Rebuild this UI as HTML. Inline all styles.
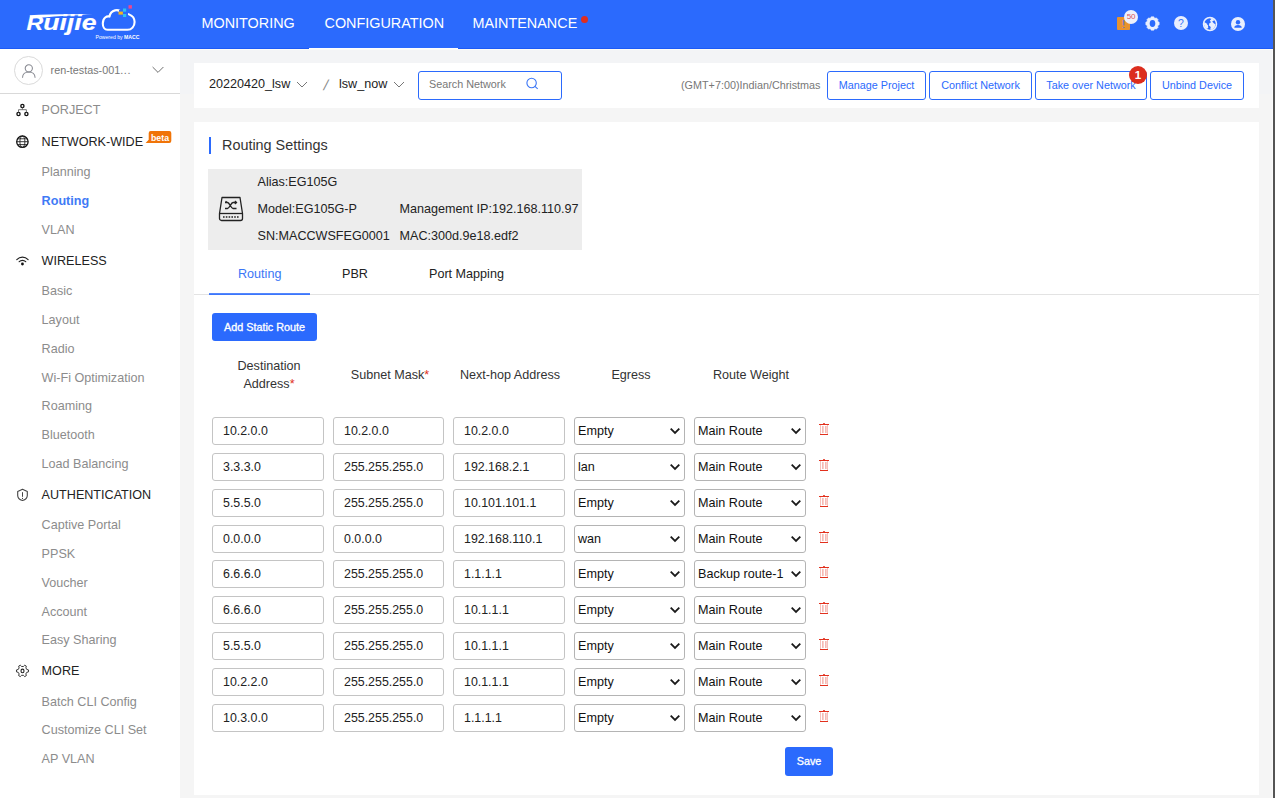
<!DOCTYPE html>
<html lang="en">
<head>
<meta charset="utf-8">
<title>Ruijie Cloud - Routing Settings</title>
<style>
*{box-sizing:border-box;margin:0;padding:0}
html,body{width:1275px;height:798px;overflow:hidden;background:#f5f5f5;font-family:"Liberation Sans",sans-serif;color:#222}
#hdr{position:absolute;left:0;top:0;width:1273px;height:49px;background:#2b6afd;border-bottom:1px solid #1c5af6}
#hdr .nav{position:absolute;top:14px;font-size:14.4px;line-height:18px;color:#fff;white-space:nowrap}
#navline{position:absolute;left:309px;top:48px;width:149px;height:1px;background:#fff}
#hline{position:absolute;left:180px;top:49px;width:1093px;height:1px;background:#fdfcf7}
#bgtop{position:absolute;left:180px;top:50px;width:1093px;height:44px;background:#f3f4f6}
#edge{position:absolute;left:1273px;top:0;width:2px;height:798px;background:#555}
#edgel{position:absolute;left:1272px;top:50px;width:1px;height:748px;background:#fafafa}
#side{position:absolute;left:0;top:49px;width:180px;height:749px;background:#fff}
#user{position:absolute;left:0;top:0;width:180px;height:45px;border-bottom:1px solid #d9d9d9}
#avatar{position:absolute;left:14px;top:7px;width:29px;height:29px;border:1px solid #dadada;border-radius:50%}
#uname{position:absolute;left:50.600px;top:13px;font-size:10.8px;line-height:16px;color:#777;white-space:nowrap}
.sh,.si{position:absolute;left:41.600px;font-size:12.6px;line-height:18px;white-space:nowrap}
.sh{color:#222}
.sh.g{color:#8c8c8c}
.si{color:#8c8c8c}
.si.act{color:#3f7af6;font-weight:bold}
.ico{position:absolute;left:15px}
#beta{position:absolute;left:148.700px;top:131px;width:22.600px;height:12px;color:#fff;font-size:8.800px;line-height:14.400px;font-weight:bold;text-align:center}
#topbar{position:absolute;left:194px;top:63px;width:1065px;height:45px;background:#fff}
#panel{position:absolute;left:194px;top:122px;width:1065px;height:673px;background:#fff}
.t{position:absolute;white-space:nowrap}
.btn{position:absolute;top:71px;height:29px;border:1px solid #2b6afd;border-radius:3px;color:#2b6afd;font-size:10.8px;line-height:27px;text-align:center;background:#fff;white-space:nowrap}
.inp{position:absolute;width:112px;height:28px;border:1px solid #c4c4c4;border-radius:3px;background:#fff;font-size:12.4px;line-height:26px;padding-left:10px;color:#222;white-space:nowrap}
.sel{position:absolute;width:112px;height:28px;border:1px solid #b4b4b4;border-radius:3px;background:#fff;font-size:12.6px;line-height:26px;padding-left:3px;color:#111;white-space:nowrap}
.sel svg{position:absolute;right:3px;top:9px}
.th{position:absolute;font-size:12.6px;line-height:18px;color:#333;text-align:center;white-space:nowrap}
.red{color:#e0301e}
.trash{position:absolute;left:819px}
</style>
</head>
<body>
<div id="hdr">
  <svg style="position:absolute;left:20px;top:0" width="130" height="48" viewBox="0 0 130 48">
    <text x="6.500" y="29.600" font-family="Liberation Sans, sans-serif" font-weight="bold" font-style="italic" font-size="19.500" fill="#fff" stroke="#fff" stroke-width="0.15" textLength="70" lengthAdjust="spacingAndGlyphs">R<tspan font-size="22.500">uijie</tspan></text><path d="M9.500 15.200C30 14.200 55 14.200 73 14.600C55 15.400 30 16.600 12 18.600Z" fill="#fff"/>
    <path d="M82.800 23.500C82.800 17.500 87 15.800 89.500 16.600C90.500 9.800 99 7.800 102 13.500C104 13 114.600 13.500 114.600 22C114.600 26.500 111.500 29.800 107.500 29.800H87.500C84.500 29.800 82.800 27 82.800 23.500Z" fill="none" stroke="#fff" stroke-width="2.1" stroke-linejoin="round"/>
    <rect x="99" y="10" width="9" height="8" fill="#2b6afd"/>
    <rect x="108.500" y="5.200" width="3.400" height="3.400" fill="#f0468c"/>
    <rect x="103" y="8.500" width="3.200" height="3.200" fill="#2cc3f0"/>
    <rect x="98.500" y="11.600" width="4.400" height="3" fill="#f5b41e"/>
    <rect x="103" y="14" width="3.200" height="3" fill="#2cc3f0"/>
    <text x="75.500" y="39" font-family="Liberation Sans, sans-serif" font-size="4.800" fill="#fff" textLength="44" lengthAdjust="spacingAndGlyphs">Powered by <tspan font-weight="bold">MACC</tspan></text>
  </svg>
  <div class="nav" style="left:201.500px">MONITORING</div>
  <div class="nav" style="left:324.500px">CONFIGURATION</div>
  <div class="nav" style="left:472.500px">MAINTENANCE</div>
  <div style="position:absolute;left:580.800px;top:15.800px;width:7.300px;height:7.300px;border-radius:50%;background:#e02d1f"></div>
  <!-- right icons -->
  <div style="position:absolute;left:1117px;top:17px;width:13px;height:13px;background:#e8922e;border-radius:1px;color:#3b6ef0;font-size:11px;line-height:15px;text-align:center">!</div>
  <div style="position:absolute;left:1124px;top:9.500px;width:14px;height:14px;border-radius:50%;background:#eef1fc;color:#d9545a;font-size:8px;line-height:13.500px;text-align:center;letter-spacing:-0.3px">50</div>
  <svg style="position:absolute;left:1144.900px;top:15.900px" width="15" height="15" viewBox="0 0 15 15"><path d="M13.03 5.75L14.17 6.17L14.17 8.83L13.03 9.25L12.65 10.17L13.15 11.28L11.28 13.15L10.17 12.65L9.25 13.03L8.83 14.17L6.17 14.17L5.75 13.03L4.83 12.65L3.72 13.15L1.85 11.28L2.35 10.17L1.97 9.25L0.83 8.83L0.83 6.17L1.97 5.75L2.35 4.83L1.85 3.72L3.72 1.85L4.83 2.35L5.75 1.97L6.17 0.83L8.83 0.83L9.25 1.97L10.17 2.35L11.28 1.85L13.15 3.72L12.65 4.83Z" fill="#e9effe" stroke="#e9effe" stroke-width="0.6" stroke-linejoin="round"/><ellipse cx="7.500" cy="7.500" rx="2.800" ry="3.400" fill="#2b6afd"/></svg>
  <div style="position:absolute;left:1174px;top:16px;width:14px;height:14px;border-radius:50%;background:#e9effe;color:#3b76f6;font-size:10.5px;line-height:14.5px;text-align:center">?</div>
  <svg style="position:absolute;left:1201.700px;top:16px" width="16" height="16" viewBox="0 0 16 16"><circle cx="8" cy="8" r="6.500" fill="#2b6afd" stroke="#e9effe" stroke-width="1.500"/><path d="M8 1.800L11.500 2.800L12 4.500L10.200 5.500L11.800 7.200L13.600 8.500L12.500 11.500L10 13.800L8.200 13.500L8.800 11L7 9.500L7.200 7.500L9 6.200L7.800 4.500L9.200 3.300Z" fill="#e9effe"/><path d="M2.200 6L4.200 7.200L5.800 9.200L6.200 11.500L5 13L3.200 11.500L2 8.500Z" fill="#e9effe"/></svg>
  <svg style="position:absolute;left:1231px;top:16.500px" width="14" height="14" viewBox="0 0 14 14"><circle cx="7" cy="7" r="7" fill="#e9effe"/><circle cx="7" cy="5.200" r="2.200" fill="#2b6afd"/><path d="M3.300 10.800C3.300 8.800 4.800 7.900 7 7.900C9.200 7.900 10.700 8.800 10.700 10.800Z" fill="#2b6afd"/></svg>
</div>
<div id="bgtop"></div>
<div id="hline"></div>
<div id="navline"></div>
<div id="side">
  <div id="user">
    <div id="avatar"></div>
    <svg style="position:absolute;left:21px;top:14px" width="16" height="16" viewBox="0 0 16 16" fill="none" stroke="#85878f" stroke-width="1.050"><circle cx="7.800" cy="5.300" r="3.600"/><path d="M1.500 14.800C1.500 11.200 4.300 8.900 7.800 8.900C11.300 8.900 14.100 11.200 14.100 14.800"/></svg>
    <div id="uname">ren-testas-001<span style="letter-spacing:0.6px">...</span></div>
    <svg style="position:absolute;left:152.400px;top:17.100px" width="12" height="8" viewBox="0 0 12 8" fill="none" stroke="#6e6e6e" stroke-width="1"><path d="M0.600 1L6 6.400L11.400 1"/></svg>
  </div>
</div>

<div class="sh g" style="top:101px">PORJECT</div>
<div class="sh" style="top:133px">NETWORK-WIDE</div>
<div class="si" style="top:163px">Planning</div>
<div class="si act" style="top:192px">Routing</div>
<div class="si" style="top:221px">VLAN</div>
<div class="sh" style="top:252px">WIRELESS</div>
<div class="si" style="top:282px">Basic</div>
<div class="si" style="top:311px">Layout</div>
<div class="si" style="top:340px">Radio</div>
<div class="si" style="top:369px">Wi-Fi Optimization</div>
<div class="si" style="top:397px">Roaming</div>
<div class="si" style="top:426px">Bluetooth</div>
<div class="si" style="top:455px">Load Balancing</div>
<div class="sh" style="top:486px">AUTHENTICATION</div>
<div class="si" style="top:516px">Captive Portal</div>
<div class="si" style="top:545px">PPSK</div>
<div class="si" style="top:574px">Voucher</div>
<div class="si" style="top:603px">Account</div>
<div class="si" style="top:631px">Easy Sharing</div>
<div class="sh" style="top:662px">MORE</div>
<div class="si" style="top:693px">Batch CLI Config</div>
<div class="si" style="top:721px">Customize CLI Set</div>
<div class="si" style="top:750px">AP VLAN</div>
<svg style="position:absolute;left:0;top:0" width="180" height="798" viewBox="0 0 180 798" fill="none" stroke="#222" stroke-width="1.1">
<g stroke-width="1.350" stroke="#111"><circle cx="22.4" cy="106" r="1.6"/><circle cx="18.5" cy="114" r="1.6"/><circle cx="26.4" cy="114" r="1.6"/></g><path d="M22.4 107.600V109.700M18.500 112.400V109.700H26.400V112.400" stroke="#666" stroke-width="0.9"/>
<circle cx="22.4" cy="141.700" r="5.700" stroke-width="1.300" stroke="#111"/><ellipse cx="22.4" cy="141.700" rx="2.500" ry="5.700" stroke-width="0.9"/><path d="M16.700 141.700H28.100M17.600 138.800H27.200M17.600 144.600H27.200" stroke-width="0.9"/>
<path d="M16.800 259.600C20 256.300 24.900 256.300 28.100 259.600M19.200 261.700C21 259.800 23.900 259.800 25.700 261.700" stroke-width="1.2" stroke-linecap="round"/><circle cx="22.450" cy="264" r="1.4" fill="#111" stroke="none"/>
<path d="M22.500 489.300L27.300 491.500V495.500C27.300 498 25 499.800 22.500 500.500C20 499.800 17.700 498 17.700 495.500V491.500Z" stroke="#444" stroke-linejoin="round"/><path d="M22.500 492.200V496.800M22.500 497.900V499" stroke="#444" stroke-width="1"/>
<path d="M26.76 669.46L28.52 669.95L28.52 671.85L26.76 672.34L25.88 673.88L26.34 675.64L24.69 676.59L23.39 675.31L21.61 675.31L20.31 676.59L18.66 675.64L19.12 673.88L18.24 672.34L16.48 671.85L16.48 669.95L18.24 669.46L19.12 667.92L18.66 666.16L20.31 665.21L21.61 666.49L23.39 666.49L24.69 665.21L26.34 666.16L25.88 667.92Z" stroke="#333" stroke-width="1" stroke-linejoin="round"/><ellipse cx="22.500" cy="670.900" rx="1.500" ry="1.800" stroke="#222" stroke-width="1.100"/>
</svg>
<svg style="position:absolute;left:140px;top:125px" width="40" height="24" viewBox="140 125 40 24"><path d="M145.600 142.900L148.700 139.700V133a2 2 0 0 1 2-2h18.600a2 2 0 0 1 2 2v7.900a2 2 0 0 1-2 2Z" fill="#f07408"/></svg>
<div id="beta">beta</div>


<div id="topbar"></div>
<div class="t" style="left:209px;top:75px;font-size:12.6px;line-height:18px;color:#222">20220420_lsw</div>
<svg style="position:absolute;left:296px;top:81px" width="12" height="8" viewBox="0 0 12 8" fill="none" stroke="#777" stroke-width="1"><path d="M1 1L6 6L11 1"/></svg>
<div class="t" style="left:323.500px;top:76px;font-size:14.5px;line-height:18px;color:#8a8a8a;transform:skewX(-14deg)">/</div>
<div class="t" style="left:339px;top:75px;font-size:12.6px;line-height:18px;color:#222">lsw_now</div>
<svg style="position:absolute;left:393px;top:81px" width="12" height="8" viewBox="0 0 12 8" fill="none" stroke="#777" stroke-width="1"><path d="M1 1L6 6L11 1"/></svg>
<div style="position:absolute;left:418px;top:71px;width:144px;height:29px;border:1px solid #2b6afd;border-radius:3px;background:#fff"></div>
<div class="t" style="left:429px;top:76px;font-size:10.8px;line-height:16px;color:#777">Search Network</div>
<svg style="position:absolute;left:525px;top:77px" width="14" height="14" viewBox="0 0 14 14" fill="none" stroke="#3b76f6" stroke-width="1.100"><circle cx="6.600" cy="6" r="4.700"/><path d="M9.900 9.400L12.700 11.800"/></svg>
<div class="t" style="left:681px;top:77px;font-size:10.8px;line-height:16px;color:#777">(GMT+7:00)Indian/Christmas</div>
<div class="btn" style="left:827px;width:99px">Manage Project</div>
<div class="btn" style="left:929px;width:103px">Conflict Network</div>
<div class="btn" style="left:1035px;width:112px">Take over Network</div>
<div class="btn" style="left:1150px;width:94px">Unbind Device</div>
<div style="position:absolute;left:1129px;top:66px;width:18px;height:18px;border-radius:50%;background:#dc2d1e;color:#fff;font-size:11.5px;font-weight:bold;line-height:18px;text-align:center">1</div>
<div id="panel"></div>
<div style="position:absolute;left:209px;top:137px;width:2px;height:17px;background:#2b6afd"></div>
<div class="t" style="left:222px;top:136px;font-size:14.4px;line-height:18px;color:#333">Routing Settings</div>
<div style="position:absolute;left:208px;top:169px;width:374px;height:81px;background:#ededed"></div>
<svg style="position:absolute;left:218px;top:196px" width="26" height="26" viewBox="0 0 26 26" fill="none" stroke="#222" stroke-width="1.300"><path d="M4 1.500H22L24.500 17.500V22.500C24.500 23.600 23.600 24.500 22.500 24.500H3.500C2.400 24.500 1.500 23.600 1.500 22.500V17.500Z" stroke-linejoin="round"/><path d="M1.500 17.500H24.500"/><path d="M5 21H21" stroke-dasharray="1.600 1.200"/><path d="M7 6.500H9.500C11.500 6.500 13 12.500 15 12.500H18.500M7 12.500H9.500C11.500 12.500 13 6.500 15 6.500H18.500" stroke-width="1.400"/><path d="M16.800 5L18.600 6.500L16.800 8M7.600 5.200L9 6.500" stroke-width="1.100"/></svg>
<div class="t" style="left:257.5px;top:173px;font-size:12.6px;line-height:18px;color:#222">Alias:EG105G</div>
<div class="t" style="left:257.5px;top:200px;font-size:12.6px;line-height:18px;color:#222">Model:EG105G-P</div>
<div class="t" style="left:399.5px;top:200px;font-size:12.6px;line-height:18px;color:#222">Management IP:192.168.110.97</div>
<div class="t" style="left:257.5px;top:227px;font-size:12.6px;line-height:18px;color:#222">SN:MACCWSFEG0001</div>
<div class="t" style="left:399.5px;top:227px;font-size:12.6px;line-height:18px;color:#222">MAC:300d.9e18.edf2</div>
<div style="position:absolute;left:194px;top:294px;width:1065px;height:1px;background:#e3e3e3"></div>
<svg style="position:absolute;left:209px;top:292px" width="102" height="4" viewBox="0 0 102 4"><rect x="0" y="1.200" width="101" height="1.700" fill="#2b6afd"/></svg>
<div class="t" style="left:238px;top:265px;font-size:12.6px;line-height:18px;color:#3b76f6">Routing</div>
<div class="t" style="left:342px;top:265px;font-size:12.6px;line-height:18px;color:#222">PBR</div>
<div class="t" style="left:429px;top:265px;font-size:12.6px;line-height:18px;color:#222">Port Mapping</div>
<div style="position:absolute;left:212px;top:313px;width:105px;height:28px;background:#2b6afd;border-radius:3px;color:#fff;-webkit-text-stroke:0.3px #fff;font-size:10.8px;line-height:28px;text-align:center;white-space:nowrap">Add Static Route</div>
<div class="th" style="left:213px;width:112px;top:357px">Destination<br>Address<span class="red">*</span></div>
<div class="th" style="left:334px;width:112px;top:366px">Subnet Mask<span class="red">*</span></div>
<div class="th" style="left:454px;width:112px;top:366px">Next-hop Address</div>
<div class="th" style="left:575px;width:112px;top:366px">Egress</div>
<div class="th" style="left:695px;width:112px;top:366px">Route Weight</div>

<div class="inp" style="left:212px;top:417px">10.2.0.0</div><div class="inp" style="left:333px;width:111px;top:417px">10.2.0.0</div><div class="inp" style="left:453px;top:417px">10.2.0.0</div><div class="sel" style="left:574px;width:111px;top:417px">Empty<svg width="12" height="8" viewBox="0 0 12 8" fill="none" stroke="#1a1a1a" stroke-width="1.800"><path d="M1.700 1.700L6 6L10.300 1.700"/></svg></div><div class="sel" style="left:694px;top:417px">Main Route<svg width="12" height="8" viewBox="0 0 12 8" fill="none" stroke="#1a1a1a" stroke-width="1.800"><path d="M1.700 1.700L6 6L10.300 1.700"/></svg></div><svg class="trash" style="top:422px" width="11" height="14" viewBox="0 0 11 14" fill="#e2301d"><rect x="0" y="2" width="10" height="1"/><rect x="4" y="1" width="2" height="1" opacity=".8"/><rect x="1" y="12" width="8" height="1"/><rect x="1" y="3" width="1" height="9" opacity=".3"/><rect x="8" y="3" width="1" height="9" opacity=".3"/><rect x="3.400" y="4" width="1" height="7" opacity=".55"/><rect x="6.400" y="4" width="1" height="7" opacity=".55"/></svg>
<div class="inp" style="left:212px;top:453px">3.3.3.0</div><div class="inp" style="left:333px;width:111px;top:453px">255.255.255.0</div><div class="inp" style="left:453px;top:453px">192.168.2.1</div><div class="sel" style="left:574px;width:111px;top:453px">lan<svg width="12" height="8" viewBox="0 0 12 8" fill="none" stroke="#1a1a1a" stroke-width="1.800"><path d="M1.700 1.700L6 6L10.300 1.700"/></svg></div><div class="sel" style="left:694px;top:453px">Main Route<svg width="12" height="8" viewBox="0 0 12 8" fill="none" stroke="#1a1a1a" stroke-width="1.800"><path d="M1.700 1.700L6 6L10.300 1.700"/></svg></div><svg class="trash" style="top:458px" width="11" height="14" viewBox="0 0 11 14" fill="#e2301d"><rect x="0" y="2" width="10" height="1"/><rect x="4" y="1" width="2" height="1" opacity=".8"/><rect x="1" y="12" width="8" height="1"/><rect x="1" y="3" width="1" height="9" opacity=".3"/><rect x="8" y="3" width="1" height="9" opacity=".3"/><rect x="3.400" y="4" width="1" height="7" opacity=".55"/><rect x="6.400" y="4" width="1" height="7" opacity=".55"/></svg>
<div class="inp" style="left:212px;top:489px">5.5.5.0</div><div class="inp" style="left:333px;width:111px;top:489px">255.255.255.0</div><div class="inp" style="left:453px;top:489px">10.101.101.1</div><div class="sel" style="left:574px;width:111px;top:489px">Empty<svg width="12" height="8" viewBox="0 0 12 8" fill="none" stroke="#1a1a1a" stroke-width="1.800"><path d="M1.700 1.700L6 6L10.300 1.700"/></svg></div><div class="sel" style="left:694px;top:489px">Main Route<svg width="12" height="8" viewBox="0 0 12 8" fill="none" stroke="#1a1a1a" stroke-width="1.800"><path d="M1.700 1.700L6 6L10.300 1.700"/></svg></div><svg class="trash" style="top:494px" width="11" height="14" viewBox="0 0 11 14" fill="#e2301d"><rect x="0" y="2" width="10" height="1"/><rect x="4" y="1" width="2" height="1" opacity=".8"/><rect x="1" y="12" width="8" height="1"/><rect x="1" y="3" width="1" height="9" opacity=".3"/><rect x="8" y="3" width="1" height="9" opacity=".3"/><rect x="3.400" y="4" width="1" height="7" opacity=".55"/><rect x="6.400" y="4" width="1" height="7" opacity=".55"/></svg>
<div class="inp" style="left:212px;top:525px">0.0.0.0</div><div class="inp" style="left:333px;width:111px;top:525px">0.0.0.0</div><div class="inp" style="left:453px;top:525px">192.168.110.1</div><div class="sel" style="left:574px;width:111px;top:525px">wan<svg width="12" height="8" viewBox="0 0 12 8" fill="none" stroke="#1a1a1a" stroke-width="1.800"><path d="M1.700 1.700L6 6L10.300 1.700"/></svg></div><div class="sel" style="left:694px;top:525px">Main Route<svg width="12" height="8" viewBox="0 0 12 8" fill="none" stroke="#1a1a1a" stroke-width="1.800"><path d="M1.700 1.700L6 6L10.300 1.700"/></svg></div><svg class="trash" style="top:530px" width="11" height="14" viewBox="0 0 11 14" fill="#e2301d"><rect x="0" y="2" width="10" height="1"/><rect x="4" y="1" width="2" height="1" opacity=".8"/><rect x="1" y="12" width="8" height="1"/><rect x="1" y="3" width="1" height="9" opacity=".3"/><rect x="8" y="3" width="1" height="9" opacity=".3"/><rect x="3.400" y="4" width="1" height="7" opacity=".55"/><rect x="6.400" y="4" width="1" height="7" opacity=".55"/></svg>
<div class="inp" style="left:212px;top:560px">6.6.6.0</div><div class="inp" style="left:333px;width:111px;top:560px">255.255.255.0</div><div class="inp" style="left:453px;top:560px">1.1.1.1</div><div class="sel" style="left:574px;width:111px;top:560px">Empty<svg width="12" height="8" viewBox="0 0 12 8" fill="none" stroke="#1a1a1a" stroke-width="1.800"><path d="M1.700 1.700L6 6L10.300 1.700"/></svg></div><div class="sel" style="left:694px;top:560px">Backup route-1<svg width="12" height="8" viewBox="0 0 12 8" fill="none" stroke="#1a1a1a" stroke-width="1.800"><path d="M1.700 1.700L6 6L10.300 1.700"/></svg></div><svg class="trash" style="top:565px" width="11" height="14" viewBox="0 0 11 14" fill="#e2301d"><rect x="0" y="2" width="10" height="1"/><rect x="4" y="1" width="2" height="1" opacity=".8"/><rect x="1" y="12" width="8" height="1"/><rect x="1" y="3" width="1" height="9" opacity=".3"/><rect x="8" y="3" width="1" height="9" opacity=".3"/><rect x="3.400" y="4" width="1" height="7" opacity=".55"/><rect x="6.400" y="4" width="1" height="7" opacity=".55"/></svg>
<div class="inp" style="left:212px;top:596px">6.6.6.0</div><div class="inp" style="left:333px;width:111px;top:596px">255.255.255.0</div><div class="inp" style="left:453px;top:596px">10.1.1.1</div><div class="sel" style="left:574px;width:111px;top:596px">Empty<svg width="12" height="8" viewBox="0 0 12 8" fill="none" stroke="#1a1a1a" stroke-width="1.800"><path d="M1.700 1.700L6 6L10.300 1.700"/></svg></div><div class="sel" style="left:694px;top:596px">Main Route<svg width="12" height="8" viewBox="0 0 12 8" fill="none" stroke="#1a1a1a" stroke-width="1.800"><path d="M1.700 1.700L6 6L10.300 1.700"/></svg></div><svg class="trash" style="top:601px" width="11" height="14" viewBox="0 0 11 14" fill="#e2301d"><rect x="0" y="2" width="10" height="1"/><rect x="4" y="1" width="2" height="1" opacity=".8"/><rect x="1" y="12" width="8" height="1"/><rect x="1" y="3" width="1" height="9" opacity=".3"/><rect x="8" y="3" width="1" height="9" opacity=".3"/><rect x="3.400" y="4" width="1" height="7" opacity=".55"/><rect x="6.400" y="4" width="1" height="7" opacity=".55"/></svg>
<div class="inp" style="left:212px;top:632px">5.5.5.0</div><div class="inp" style="left:333px;width:111px;top:632px">255.255.255.0</div><div class="inp" style="left:453px;top:632px">10.1.1.1</div><div class="sel" style="left:574px;width:111px;top:632px">Empty<svg width="12" height="8" viewBox="0 0 12 8" fill="none" stroke="#1a1a1a" stroke-width="1.800"><path d="M1.700 1.700L6 6L10.300 1.700"/></svg></div><div class="sel" style="left:694px;top:632px">Main Route<svg width="12" height="8" viewBox="0 0 12 8" fill="none" stroke="#1a1a1a" stroke-width="1.800"><path d="M1.700 1.700L6 6L10.300 1.700"/></svg></div><svg class="trash" style="top:637px" width="11" height="14" viewBox="0 0 11 14" fill="#e2301d"><rect x="0" y="2" width="10" height="1"/><rect x="4" y="1" width="2" height="1" opacity=".8"/><rect x="1" y="12" width="8" height="1"/><rect x="1" y="3" width="1" height="9" opacity=".3"/><rect x="8" y="3" width="1" height="9" opacity=".3"/><rect x="3.400" y="4" width="1" height="7" opacity=".55"/><rect x="6.400" y="4" width="1" height="7" opacity=".55"/></svg>
<div class="inp" style="left:212px;top:668px">10.2.2.0</div><div class="inp" style="left:333px;width:111px;top:668px">255.255.255.0</div><div class="inp" style="left:453px;top:668px">10.1.1.1</div><div class="sel" style="left:574px;width:111px;top:668px">Empty<svg width="12" height="8" viewBox="0 0 12 8" fill="none" stroke="#1a1a1a" stroke-width="1.800"><path d="M1.700 1.700L6 6L10.300 1.700"/></svg></div><div class="sel" style="left:694px;top:668px">Main Route<svg width="12" height="8" viewBox="0 0 12 8" fill="none" stroke="#1a1a1a" stroke-width="1.800"><path d="M1.700 1.700L6 6L10.300 1.700"/></svg></div><svg class="trash" style="top:673px" width="11" height="14" viewBox="0 0 11 14" fill="#e2301d"><rect x="0" y="2" width="10" height="1"/><rect x="4" y="1" width="2" height="1" opacity=".8"/><rect x="1" y="12" width="8" height="1"/><rect x="1" y="3" width="1" height="9" opacity=".3"/><rect x="8" y="3" width="1" height="9" opacity=".3"/><rect x="3.400" y="4" width="1" height="7" opacity=".55"/><rect x="6.400" y="4" width="1" height="7" opacity=".55"/></svg>
<div class="inp" style="left:212px;top:704px">10.3.0.0</div><div class="inp" style="left:333px;width:111px;top:704px">255.255.255.0</div><div class="inp" style="left:453px;top:704px">1.1.1.1</div><div class="sel" style="left:574px;width:111px;top:704px">Empty<svg width="12" height="8" viewBox="0 0 12 8" fill="none" stroke="#1a1a1a" stroke-width="1.800"><path d="M1.700 1.700L6 6L10.300 1.700"/></svg></div><div class="sel" style="left:694px;top:704px">Main Route<svg width="12" height="8" viewBox="0 0 12 8" fill="none" stroke="#1a1a1a" stroke-width="1.800"><path d="M1.700 1.700L6 6L10.300 1.700"/></svg></div><svg class="trash" style="top:709px" width="11" height="14" viewBox="0 0 11 14" fill="#e2301d"><rect x="0" y="2" width="10" height="1"/><rect x="4" y="1" width="2" height="1" opacity=".8"/><rect x="1" y="12" width="8" height="1"/><rect x="1" y="3" width="1" height="9" opacity=".3"/><rect x="8" y="3" width="1" height="9" opacity=".3"/><rect x="3.400" y="4" width="1" height="7" opacity=".55"/><rect x="6.400" y="4" width="1" height="7" opacity=".55"/></svg>

<div style="position:absolute;left:785px;top:747px;width:48px;height:29px;background:#2b6afd;border-radius:3px;color:#fff;-webkit-text-stroke:0.3px #fff;font-size:10.8px;line-height:29px;text-align:center">Save</div>
<div id="edgel"></div>
<div id="edge"></div>
</body>
</html>
